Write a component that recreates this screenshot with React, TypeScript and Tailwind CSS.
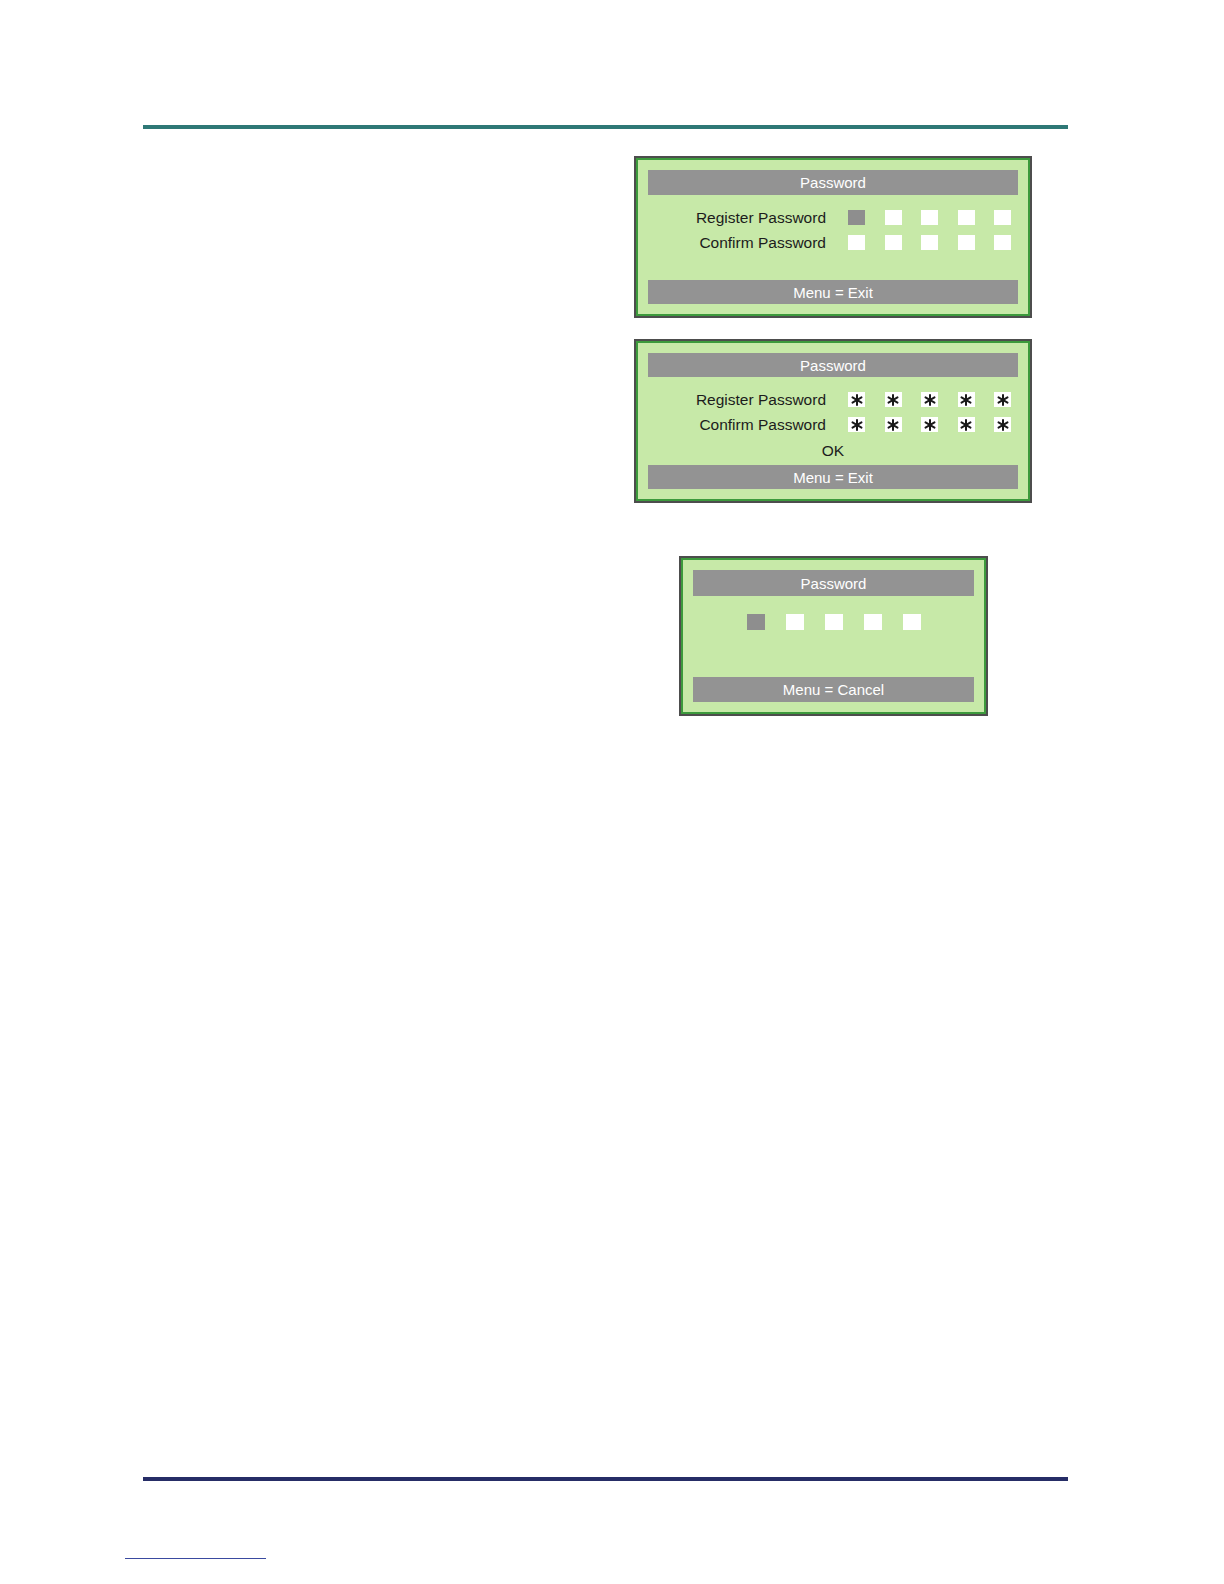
import React from 'react';

const font = { fontFamily: '"Liberation Sans", Arial, sans-serif' };

const Asterisk = () => (
  <svg width="12" height="12" viewBox="0 0 12 12" className="text-[#1a1a1a]">
    <g stroke="currentColor" strokeWidth="2" strokeLinecap="round">
      <line x1="6" y1="1" x2="6" y2="11" />
      <line x1="1.5" y1="3.4" x2="10.5" y2="8.6" />
      <line x1="1.5" y1="8.6" x2="10.5" y2="3.4" />
    </g>
  </svg>
);

const Cell = ({ kind }: { kind: 'active' | 'empty' | 'star' }) => (
  <div
    className={`w-[17px] h-[15px] flex items-center justify-center ${
      kind === 'active' ? 'bg-[#8e8e8e]' : 'bg-white'
    }`}
  >
    {kind === 'star' && <Asterisk />}
  </div>
);

const Bar = ({ children, h = 'h-[25px]' }: { children: React.ReactNode; h?: string }) => (
  <div className={`${h} bg-[#939393] flex items-center justify-center text-white text-[15px] leading-none`}>
    {children}
  </div>
);

const Frame = ({ children, className }: { children: React.ReactNode; className: string }) => (
  <div className={`border-2 border-[#4d4d4d] ${className}`}>
    <div className="h-full border-2 border-[#3c9a3c] bg-[#c7e9a8] px-[10px] py-[10px] flex flex-col">
      {children}
    </div>
  </div>
);

const Row = ({ label, cells }: { label: string; cells: ('active' | 'empty' | 'star')[] }) => (
  <div className="flex items-center h-[25px]">
    <div className="w-[178px] text-right text-[15.5px] text-[#1c1c1c] leading-none">{label}</div>
    <div className="ml-[22px] flex gap-[19.5px]">
      {cells.map((c, i) => (
        <Cell key={i} kind={c} />
      ))}
    </div>
  </div>
);

export default function App() {
  return (
    <div className="w-full h-screen overflow-hidden bg-white relative" style={font}>
      <div className="pt-[125px] pl-[143px]">
        <div className="w-[925px] h-[4px] bg-[#2e7876]" />
      </div>

      <div className="pl-[634px] pt-[27px] flex flex-col">
        <Frame className="w-[398px] h-[162px]">
          <Bar>Password</Bar>
          <div className="mt-[10px]">
            <Row label="Register Password" cells={['active', 'empty', 'empty', 'empty', 'empty']} />
            <Row label="Confirm Password" cells={['empty', 'empty', 'empty', 'empty', 'empty']} />
          </div>
          <div className="mt-auto">
            <Bar h="h-[24px]">Menu = Exit</Bar>
          </div>
        </Frame>

        <Frame className="w-[398px] h-[164px] mt-[21px]">
          <Bar h="h-[24px]">Password</Bar>
          <div className="mt-[10px]">
            <Row label="Register Password" cells={['star', 'star', 'star', 'star', 'star']} />
            <Row label="Confirm Password" cells={['star', 'star', 'star', 'star', 'star']} />
          </div>
          <div className="h-[28px] flex items-center justify-center text-[15.5px] text-[#1c1c1c] leading-none">OK</div>
          <div className="mt-auto">
            <Bar h="h-[24px]">Menu = Exit</Bar>
          </div>
        </Frame>

        <Frame className="w-[309px] h-[160px] mt-[53px] ml-[45px]">
          <Bar h="h-[26px]">Password</Bar>
          <div className="mt-[18px] flex justify-center gap-[21px]">
            {['active', 'empty', 'empty', 'empty', 'empty'].map((k, i) => (
              <div key={i} className={`w-[18px] h-[16px] ${k === 'active' ? 'bg-[#8e8e8e]' : 'bg-white'}`} />
            ))}
          </div>
          <div className="mt-auto">
            <Bar h="h-[25px]">Menu = Cancel</Bar>
          </div>
        </Frame>
      </div>

      <div className="absolute left-[143px] top-[1477px] w-[925px] h-[4px] bg-[#262d66]" />
      <div className="absolute left-[125px] top-[1558px] w-[141px] h-[1px] bg-[#3a4aa0]" />
    </div>
  );
}
